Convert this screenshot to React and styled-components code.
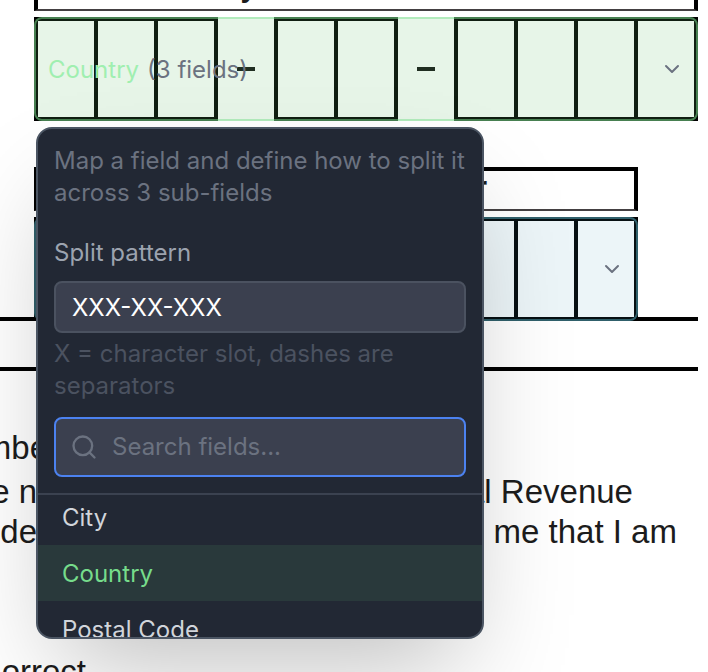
import React, { useState } from "react";
import styled, { createGlobalStyle } from "styled-components";
import { ChevronDown, Search } from "lucide-react";

const GlobalStyle = createGlobalStyle`
  *, *::before, *::after { box-sizing: border-box; }
  body {
    margin: 0;
    background: #fff;
    overflow: hidden;
  }
  button, input { font: inherit; letter-spacing: inherit; }
`;

const Page = styled.main`
  height: 100vh;
  overflow: hidden;
  font-family: "Liberation Sans", Arial, sans-serif;
  color: #1c1c1c;
`;

/* The form is scrolled so that its first label is mostly out of view. */
const TaxForm = styled.section`
  margin: -33px 10px 0 0;
  padding-left: 34px;
  border-bottom: 4px solid #000;
`;

const FormGroup = styled.div`
  margin-right: ${({ $inset }) => $inset || 0}px;
  margin-bottom: ${({ $last }) => ($last ? -4 : 46)}px;
`;

const FormLabel = styled.div`
  height: 44px;
  padding: 4px 14px 0;
  border: 4px solid #000;
  border-bottom: 2px solid #444042;
  font-size: 29px;
  font-weight: 700;
  line-height: 24px;
  white-space: nowrap;
`;

const Comb = styled.div`
  position: relative;
  display: grid;
  grid-template-columns: repeat(${({ $columns }) => $columns}, minmax(0, 1fr));
  height: 104px;
  margin-top: 6px;
  padding-right: 4px;
`;

/* Each group reaches one line width past its columns to close its right side. */
const Cells = styled.div`
  display: flex;
  grid-column: span ${({ $count }) => $count};
  margin-right: -4px;
  border: 4px solid #000;
`;

const Cell = styled.div`
  flex: 1;
  & + & { border-left: 4px solid #000; }
`;

const Dash = styled.div`
  display: flex;
  align-items: center;
  justify-content: center;
  padding-left: 4px;
  &::before {
    content: "";
    width: 18px;
    height: 4px;
    background: #141414;
  }
`;

const tones = {
  green: { fill: "rgba(102, 191, 108, 0.157)", line: "rgba(125, 225, 145, 0.5)" },
  blue: { fill: "rgba(70, 160, 190, 0.1)", line: "rgba(90, 175, 195, 0.5)" },
};

const FieldTrigger = styled.button`
  position: absolute;
  inset: 0;
  display: flex;
  align-items: center;
  gap: 8px;
  padding: 0 12px;
  border: 2px solid ${({ $tone }) => tones[$tone].line};
  border-radius: 8px;
  background: ${({ $tone }) => tones[$tone].fill};
  font-family: Inter, sans-serif;
  font-size: 24px;
  color: #6b7280;
  cursor: pointer;
  svg { margin-left: auto; }
`;

const MappedName = styled.span`
  color: #a0efb0;
`;

const Popover = styled.div`
  position: absolute;
  z-index: 2;
  top: 110px;
  left: 2px;
  width: 448px;
  height: 512px;
  display: flex;
  flex-direction: column;
  overflow: hidden;
  border: 2px solid #4b5563;
  border-radius: 16px;
  background: #222834;
  box-shadow: 0 50px 100px -24px rgba(0, 0, 0, 0.25);
  font-family: Inter, sans-serif;
  font-size: 24px;
  line-height: 32px;
`;

const PopoverHead = styled.div`
  display: flex;
  flex-direction: column;
  padding: 16px;
  border-bottom: 2px solid #3b4250;
`;

const Description = styled.p`
  margin: 0 0 28px;
  color: #6b7280;
`;

const PatternLabel = styled.label`
  margin-bottom: 12px;
  color: #9ca3af;
`;

const PatternInput = styled.input`
  width: 100%;
  height: 52px;
  padding: 0 16px;
  border: 2px solid #4b5260;
  border-radius: 8px;
  background: #3b404f;
  color: #fff;
  outline: none;
`;

const Hint = styled.p`
  margin: 5px 0 15px;
  color: #4b5260;
`;

const SearchBox = styled.label`
  display: flex;
  align-items: center;
  gap: 14px;
  height: 60px;
  padding: 0 14px;
  border: 2px solid #4c82f0;
  border-radius: 8px;
  background: #3b404f;
  color: #6b7280;
`;

const SearchInput = styled.input`
  flex: 1;
  min-width: 0;
  padding: 0;
  border: 0;
  background: transparent;
  color: #fff;
  outline: none;
  &::placeholder { color: #6b7280; opacity: 1; }
`;

const OptionList = styled.div`
  flex: 1;
  min-height: 0;
  overflow: hidden;
`;

const Options = styled.div`
  display: flex;
  flex-direction: column;
  margin-top: -6px;
`;

const Option = styled.button`
  height: 56px;
  padding: 2px 24px 0;
  border: 0;
  background: ${({ $selected }) => ($selected ? "#29393b" : "transparent")};
  color: ${({ $selected }) => ($selected ? "#76dc8b" : "#d1d5db")};
  text-align: left;
  cursor: pointer;
`;

const Rule = styled.hr`
  height: 4px;
  margin: 46px 10px 57px 0;
  border: 0;
  background: #000;
`;

const Prose = styled.div`
  font-size: 33px;
  line-height: 40px;
  white-space: nowrap;
`;

const Line = styled.div`
  display: grid;
  grid-template-columns: 466px 1fr;
  height: 40px;
  margin-bottom: ${({ $after }) => $after || 0}px;
`;

const Leading = styled.span`
  display: flex;
  justify-content: flex-end;
  width: ${({ $width }) => $width}px;
  overflow: hidden;
`;

function CellGroup({ count }) {
  return (
    <Cells $count={count}>
      {Array.from({ length: count }, (_, i) => (
        <Cell key={i} />
      ))}
    </Cells>
  );
}

const fields = ["City", "Country", "Postal Code"];

export default function App() {
  const [selected, setSelected] = useState("Country");
  const [pattern, setPattern] = useState("XXX-XX-XXX");
  const [query, setQuery] = useState("");
  const shown = fields.filter((f) => f.toLowerCase().includes(query.toLowerCase()));

  return (
    <Page>
      <GlobalStyle />
      <TaxForm>
        <FormGroup>
          <FormLabel>Social security number</FormLabel>
          <Comb $columns={11}>
            <CellGroup count={3} />
            <Dash />
            <CellGroup count={2} />
            <Dash />
            <CellGroup count={4} />
            <FieldTrigger type="button" $tone="green" aria-expanded="true">
              <MappedName>{selected}</MappedName>
              <span>(3 fields)</span>
              <ChevronDown size={24} strokeWidth={2} />
            </FieldTrigger>
            <Popover>
              <PopoverHead>
                <Description>
                  Map a field and define how to split it across 3 sub-fields
                </Description>
                <PatternLabel htmlFor="pattern">Split pattern</PatternLabel>
                <PatternInput
                  id="pattern"
                  value={pattern}
                  onChange={(e) => setPattern(e.target.value)}
                />
                <Hint>X = character slot, dashes are separators</Hint>
                <SearchBox>
                  <Search size={28} strokeWidth={2} />
                  <SearchInput
                    aria-label="Search fields"
                    placeholder="Search fields..."
                    value={query}
                    onChange={(e) => setQuery(e.target.value)}
                  />
                </SearchBox>
              </PopoverHead>
              <OptionList>
                <Options>
                  {shown.map((name) => (
                    <Option
                      key={name}
                      type="button"
                      $selected={name === selected}
                      onClick={() => setSelected(name)}
                    >
                      {name}
                    </Option>
                  ))}
                </Options>
              </OptionList>
            </Popover>
          </Comb>
        </FormGroup>
        <FormGroup $inset={60} $last>
          <FormLabel>Employer identification number</FormLabel>
          <Comb $columns={10}>
            <CellGroup count={2} />
            <Dash />
            <CellGroup count={7} />
            <FieldTrigger type="button" $tone="blue" aria-label="Map field">
              <ChevronDown size={24} strokeWidth={2} />
            </FieldTrigger>
          </Comb>
        </FormGroup>
      </TaxForm>
      <Rule />
      <Prose>
        <Line $after={4}>
          <Leading $width={48}>mbe</Leading>
        </Line>
        <Line>
          <Leading $width={37}>e n</Leading>
          <span>al Revenue</span>
        </Line>
        <Line $after={100}>
          <Leading $width={37}>de</Leading>
          <span>d me that I am</span>
        </Line>
        <Line>
          <Leading $width={86}>orrect</Leading>
        </Line>
      </Prose>
    </Page>
  );
}
